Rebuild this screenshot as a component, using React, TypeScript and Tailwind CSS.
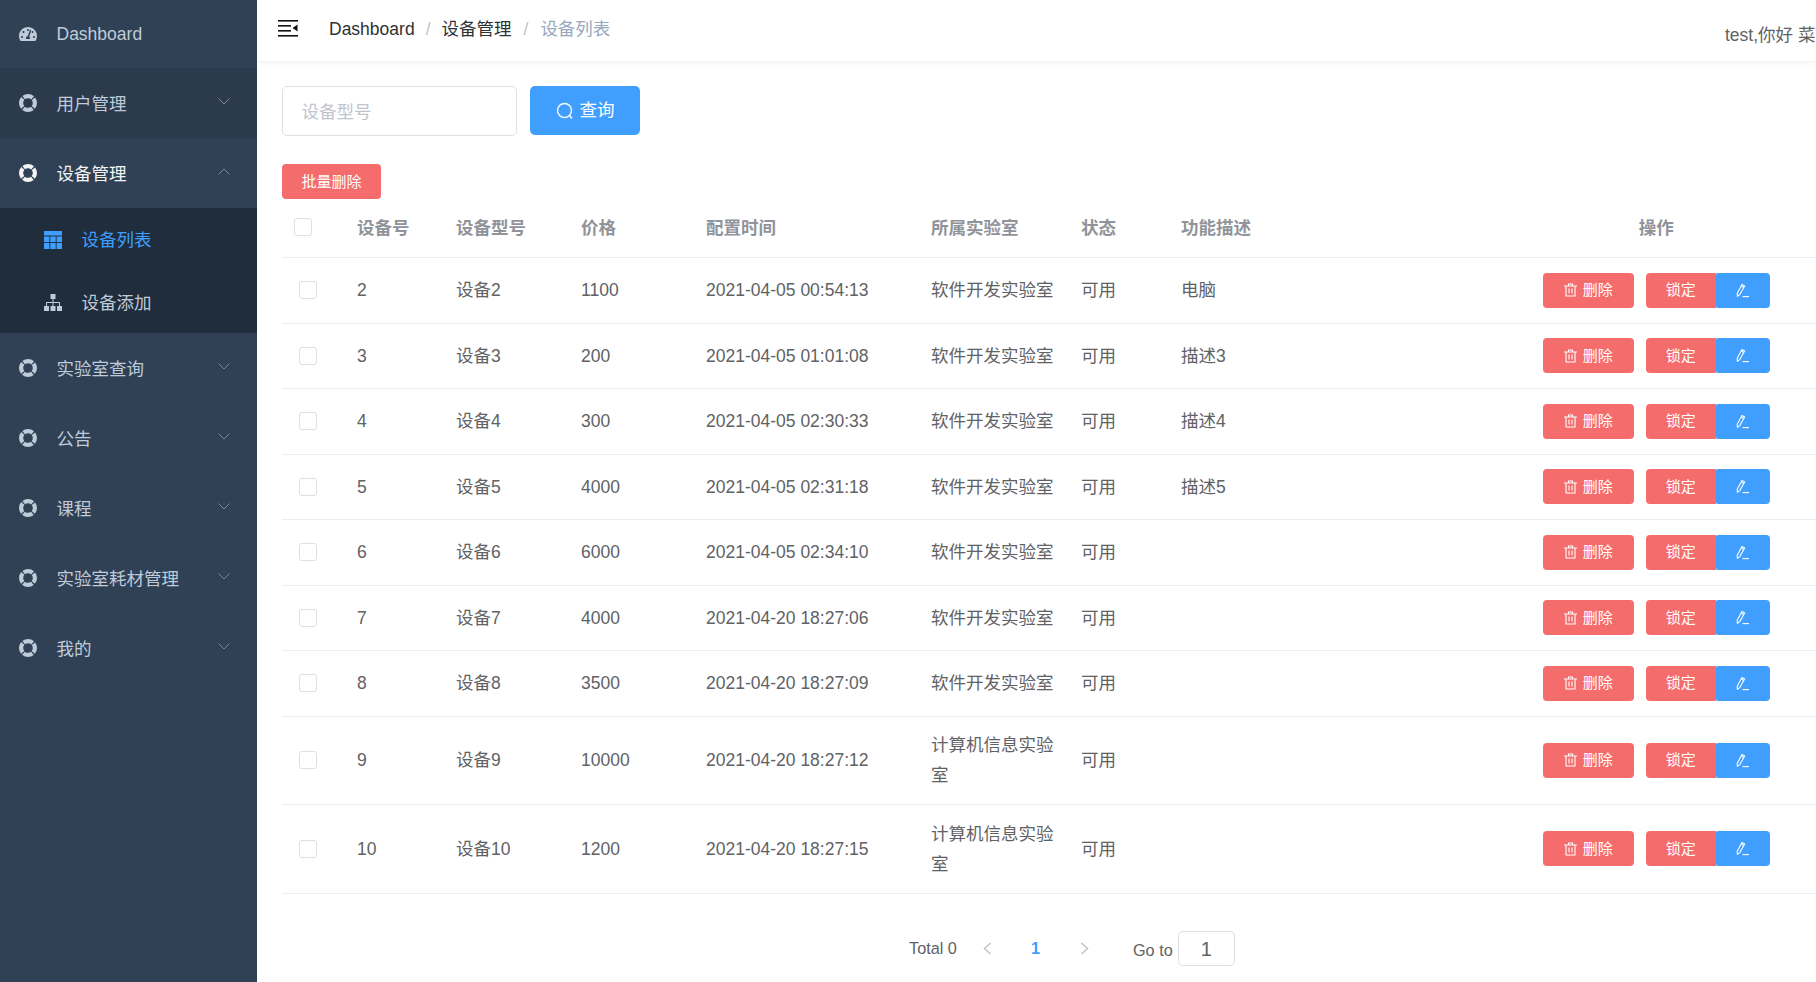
import React from "react";
import { FaTachometerAlt } from "react-icons/fa";

const Chevron = ({ up }: { up?: boolean }) => (
  <svg width="12" height="7" viewBox="0 0 12 7" fill="none" className="shrink-0">
    <polyline points={up ? "0.5,6.5 6,1 11.5,6.5" : "0.5,0.5 6,6 11.5,0.5"} stroke="#7d8896" strokeWidth="1" />
  </svg>
);

const RingIcon = ({ color }: { color: string }) => (
  <svg width="18" height="18" viewBox="0 0 18 18" fill="none" className="shrink-0">
    <circle cx="9" cy="9" r="6.9" stroke={color} strokeWidth="4.2" strokeDasharray="9.64 1.2" strokeDashoffset="4.82" />
  </svg>
);

const TableIcon = () => (
  <svg width="18" height="18" viewBox="0 0 18 18" fill="#409eff" className="shrink-0">
    <rect x="0" y="0" width="18" height="4.5" />
    <rect x="0" y="5.5" width="5.4" height="5.6" />
    <rect x="6.3" y="5.5" width="5.4" height="5.6" />
    <rect x="12.6" y="5.5" width="5.4" height="5.6" />
    <rect x="0" y="12" width="5.4" height="6" />
    <rect x="6.3" y="12" width="5.4" height="6" />
    <rect x="12.6" y="12" width="5.4" height="6" />
  </svg>
);

const SitemapIcon = () => (
  <svg width="18" height="17" viewBox="0 0 18 17" fill="#bfcbd9" className="shrink-0">
    <rect x="6.5" y="0" width="5" height="5" />
    <rect x="0" y="12" width="5" height="5" />
    <rect x="6.5" y="12" width="5" height="5" />
    <rect x="13" y="12" width="5" height="5" />
    <path d="M8.5 5h1v3h6.5v4h-1V9h-5.5v3h-1V9H3v3H2V8h6.5z" />
  </svg>
);

const TrashIcon = () => (
  <svg width="13" height="14" viewBox="0 0 13 14" fill="none" stroke="#fff" strokeWidth="1.1">
    <path d="M0 3h13M4.5 3V1h4v2M2 3v10h9V3" />
    <path d="M5 5.5v5M8 5.5v5" />
  </svg>
);

const EditIcon = () => (
  <svg width="14" height="15" viewBox="0 0 14 15" fill="none" stroke="#fff" strokeWidth="1.1">
    <path d="M1.2 10.2 6 1.6 8.6 3 3.8 11.6 1.4 13.2Z" />
    <path d="M5.2 3 7.8 4.4" />
    <path d="M6.5 13.6H13" />
  </svg>
);

const SubMenu = ({ label, open, dark, active }: { label: string; open?: boolean; dark?: boolean; active?: boolean }) => (
  <div className={`flex h-[70px] items-center pl-[19px] pr-[27px] ${dark ? "bg-[#2b3a4d]" : "bg-[#304156]"}`}>
    <RingIcon color={active ? "#f4f4f5" : "#bfcbd9"} />
    <span className={`ml-[19.5px] mt-[2px] flex-1 ${active ? "text-[#f4f4f5]" : "text-[#bfcbd9]"}`}>{label}</span>
    <span className="-mt-[4px] flex">
      <Chevron up={open} />
    </span>
  </div>
);

const rows = [
  ["2", "设备2", "1100", "2021-04-05 00:54:13", "软件开发实验室", "可用", "电脑"],
  ["3", "设备3", "200", "2021-04-05 01:01:08", "软件开发实验室", "可用", "描述3"],
  ["4", "设备4", "300", "2021-04-05 02:30:33", "软件开发实验室", "可用", "描述4"],
  ["5", "设备5", "4000", "2021-04-05 02:31:18", "软件开发实验室", "可用", "描述5"],
  ["6", "设备6", "6000", "2021-04-05 02:34:10", "软件开发实验室", "可用", ""],
  ["7", "设备7", "4000", "2021-04-20 18:27:06", "软件开发实验室", "可用", ""],
  ["8", "设备8", "3500", "2021-04-20 18:27:09", "软件开发实验室", "可用", ""],
  ["9", "设备9", "10000", "2021-04-20 18:27:12", "计算机信息实验室", "可用", ""],
  ["10", "设备10", "1200", "2021-04-20 18:27:15", "计算机信息实验室", "可用", ""],
];

const Check = () => <span className="block h-[18px] w-[18px] rounded-[3px] border border-[#dcdfe6] bg-white" />;

const headers = ["设备号", "设备型号", "价格", "配置时间", "所属实验室", "状态", "功能描述"];

export default function App() {
  return (
    <div
      className="flex h-[982px] w-[1816px] overflow-hidden bg-white text-[17.5px]"
      style={{ fontFamily: '"Liberation Sans", "Noto Sans CJK SC", sans-serif' }}
    >
      <aside className="h-full w-[257px] shrink-0 bg-[#304156]">
        <div className="flex h-[68px] items-center pl-[19px] text-[#bfcbd9]">
          <FaTachometerAlt size={18} className="w-[18px] shrink-0" />
          <span className="ml-[19.5px]">Dashboard</span>
        </div>
        <SubMenu label="用户管理" dark />
        <SubMenu label="设备管理" open active />
        <div className="h-[125px] bg-[#1f2d3d]">
          <div className="flex h-[64px] items-center pl-[44px] text-[#409eff]">
            <TableIcon />
            <span className="ml-[19.5px]">设备列表</span>
          </div>
          <div className="flex h-[61px] items-center pl-[44px] text-[#bfcbd9]">
            <SitemapIcon />
            <span className="ml-[19.5px] mt-[2px]">设备添加</span>
          </div>
        </div>
        <SubMenu label="实验室查询" />
        <SubMenu label="公告" />
        <SubMenu label="课程" />
        <SubMenu label="实验室耗材管理" />
        <SubMenu label="我的" />
      </aside>

      <div className="flex min-w-0 flex-1 flex-col overflow-hidden">
        <header className="flex h-[61px] shrink-0 shadow-[0_1px_5px_rgba(0,21,41,0.08)]">
          <svg width="20" height="17" viewBox="0 0 20 17" className="ml-[21px] mt-[19.5px] shrink-0" fill="#111">
            <rect x="0" y="0" width="20" height="1.6" />
            <rect x="0" y="5" width="13" height="1.6" />
            <rect x="0" y="10" width="13" height="1.6" />
            <rect x="0" y="15" width="20" height="1.6" />
            <polygon points="14.5,8 19.5,4.5 19.5,11.5" />
          </svg>
          <div className="ml-[31px] mt-[17px] flex h-[24px] items-center whitespace-nowrap">
            <span className="text-[#303133]">Dashboard</span>
            <span className="mx-[11px] text-[#c0c4cc]">/</span>
            <span className="text-[#303133]">设备管理</span>
            <span className="mx-[12px] text-[#c0c4cc]">/</span>
            <span className="text-[#97a8be]">设备列表</span>
          </div>
          <div className="ml-auto mt-[22px] h-[24px] w-[91px] overflow-hidden whitespace-nowrap text-[#606266]">test,你好 菜单</div>
        </header>

        <main className="flex-1 pl-[25px]">
          <div className="mt-[25px] flex h-[50px] items-start">
            <div className="flex h-[50px] w-[235px] items-center rounded-[5px] border border-[#dcdfe6] pl-[18.5px] pt-[2px] text-[#c0c4cc]">设备型号</div>
            <button className="ml-[13px] flex h-[49px] w-[110px] items-center justify-center gap-[6px] rounded-[5px] bg-[#409eff] text-white">
              <svg width="18" height="18" viewBox="0 0 18 18" fill="none" stroke="#fff" strokeWidth="1.4">
                <circle cx="8.5" cy="8.5" r="7" />
                <path d="M13.5 13.5 16 16.5" />
              </svg>
              查询
            </button>
          </div>
          <button className="mt-[28px] block h-[35px] w-[99px] rounded-[4px] bg-[#f56c6c] pt-[1px] text-[15px] text-white">批量删除</button>

          <table className="w-[1534px] table-fixed border-collapse">
            <colgroup>
              <col className="w-[62.5px]" />
              <col className="w-[99px]" />
              <col className="w-[125px]" />
              <col className="w-[125px]" />
              <col className="w-[225px]" />
              <col className="w-[150px]" />
              <col className="w-[100px]" />
              <col className="w-[328px]" />
              <col className="w-[319.5px]" />
            </colgroup>
            <thead>
              <tr className="h-[58.5px] border-b border-[#ebeef5]">
                <th className="pb-[2px] pl-[12px] text-left font-normal">
                  <Check />
                </th>
                {headers.map((h) => (
                  <th key={h} className="px-[12.5px] text-left font-bold text-[#909399]">{h}</th>
                ))}
                <th className="px-[12.5px] text-center font-bold text-[#909399]">操作</th>
              </tr>
            </thead>
            <tbody>
              {rows.map((r) => {
                const tall = r[4].length > 7;
                return (
                  <tr key={r[0]} className={`border-b border-[#ebeef5] text-[#606266] ${tall ? "h-[88.5px]" : "h-[65.5px]"}`}>
                    <td className="pl-[17px]">
                      <Check />
                    </td>
                    {r.map((c, i) => (
                      <td key={i} className={`px-[12.5px] ${i === 4 ? "leading-[30px]" : ""}`}>{c}</td>
                    ))}
                    <td>
                      <div className="flex items-center justify-center">
                        <button className="flex h-[35px] w-[91px] items-center justify-center gap-[6px] rounded-[4px] bg-[#f56c6c] text-[15px] text-white">
                          <TrashIcon />
                          删除
                        </button>
                        <button className="ml-[12px] h-[35px] w-[70px] rounded-l-[4px] bg-[#f56c6c] text-[15px] text-white">锁定</button>
                        <button className="flex h-[35px] w-[54px] items-center justify-center rounded-r-[4px] rounded-l-[2px] bg-[#409eff]">
                          <EditIcon />
                        </button>
                      </div>
                    </td>
                  </tr>
                );
              })}
            </tbody>
          </table>

          <div className="ml-[627px] mt-[38px] flex h-[34px] items-center whitespace-nowrap text-[16.25px] text-[#606266]">
            <span className="-mt-[1px]">Total 0</span>
            <svg width="9" height="13" viewBox="0 0 9 13" fill="none" stroke="#c0c4cc" strokeWidth="1.6" className="ml-[26px]">
              <polyline points="7.5,1 1.5,6.5 7.5,12" />
            </svg>
            <span className="ml-[39px] -mt-[1px] font-bold text-[#409eff]">1</span>
            <svg width="9" height="13" viewBox="0 0 9 13" fill="none" stroke="#c0c4cc" strokeWidth="1.6" className="ml-[40px]">
              <polyline points="1.5,1 7.5,6.5 1.5,12" />
            </svg>
            <span className="ml-[44px] mt-[3px]">Go to</span>
            <span className="ml-[5px] flex h-[35px] w-[57px] items-center justify-center rounded-[5px] border border-[#dcdfe6] text-[20px]">1</span>
          </div>
        </main>
      </div>
    </div>
  );
}
